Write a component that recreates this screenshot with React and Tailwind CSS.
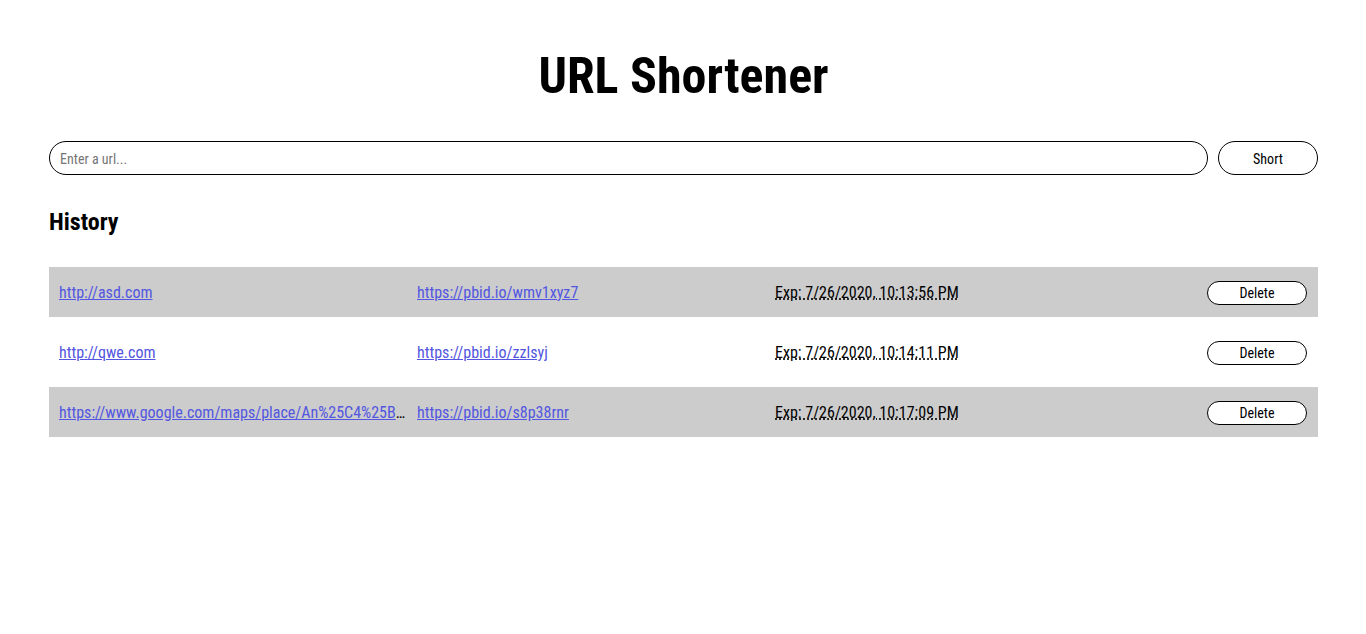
import React, { useState } from "react";

const HISTORY = [
  {
    id: "wmv1xyz7",
    url: "http://asd.com",
    short: "https://pbid.io/wmv1xyz7",
    exp: "Exp: 7/26/2020, 10:13:56 PM",
  },
  {
    id: "zzlsyj",
    url: "http://qwe.com",
    short: "https://pbid.io/zzlsyj",
    exp: "Exp: 7/26/2020, 10:14:11 PM",
  },
  {
    id: "s8p38rnr",
    url: "https://www.google.com/maps/place/An%25C4%25BBuseni+Gaming+Cafe/@44.4231,26.1010",
    short: "https://pbid.io/s8p38rnr",
    exp: "Exp: 7/26/2020, 10:17:09 PM",
  },
];

function App() {
  const [url, setUrl] = useState("");
  const [history, setHistory] = useState(HISTORY);

  // condensed width of Roboto
  const font = { fontFamily: "'Roboto Condensed', Roboto, sans-serif", fontStretch: "75%" };

  return (
    <div style={font} className="min-h-screen bg-white text-black pl-[49px] pr-[48px]">
      <h1 className="pt-[45px] text-center text-[50px] font-bold leading-[62px]">URL Shortener</h1>

      <form
        className="mt-[34px] flex gap-[10px]"
        onSubmit={(e) => e.preventDefault()}
      >
        <input
          value={url}
          onChange={(e) => setUrl(e.target.value)}
          placeholder="Enter a url..."
          className="h-[34px] flex-1 rounded-full border border-black px-[10px] pt-px text-[14px] outline-none placeholder:text-[#757575]"
        />
        <button className="h-[34px] w-[100px] rounded-full border border-black bg-white pt-[3px] text-[14px]">
          Short
        </button>
      </form>

      <h2 className="mt-[33px] text-[24px] font-bold leading-[28px]">History</h2>

      <div className="mt-[31px] flex flex-col gap-[10px]">
        {history.map((item, i) => (
          <div
            key={item.id}
            className={`flex h-[50px] items-center pl-[10px] pt-[2px] text-[16px] ${i % 2 === 0 ? "bg-[#cccccc]" : "bg-white"}`}
          >
            <div className="w-[358px] shrink-0 truncate pr-[10px]">
              <a href="#" className="text-[#5356e0] underline">
                {item.url}
              </a>
            </div>
            <div className="w-[358px] shrink-0 truncate pr-[10px]">
              <a href="#" className="text-[#5356e0] underline">
                {item.short}
              </a>
            </div>
            <div className="w-[358px] shrink-0">
              <abbr title="Expiration date" className="underline decoration-dotted">
                {item.exp}
              </abbr>
            </div>
            <div className="flex flex-1 justify-end pr-[11px]">
              <button
                onClick={() => setHistory((prev) => prev.filter((h) => h.id !== item.id))}
                className="h-[24px] w-[100px] rounded-full border border-black bg-white text-[14px]"
              >
                Delete
              </button>
            </div>
          </div>
        ))}
      </div>
    </div>
  );
}

export default App;
